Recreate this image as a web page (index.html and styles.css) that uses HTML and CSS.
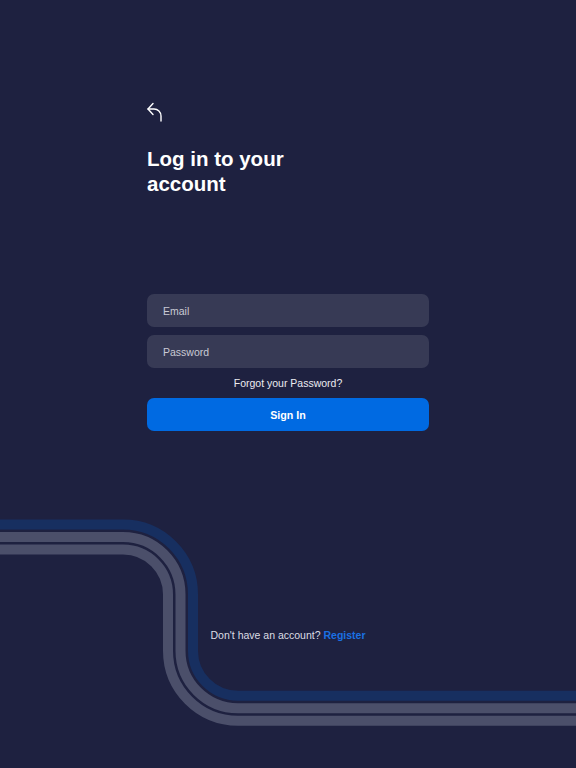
FILE: index.html
```html
<!DOCTYPE html>
<html lang="en">
<head>
    <meta charset="UTF-8">
    <meta name="viewport" content="width=device-width, initial-scale=1.0">
    <title>Log in</title>
    <link rel="stylesheet" href="styles.css">
</head>
<body>

    <div class="page">
        <!-- decorative stripes -->
        <svg class="stripes" width="576" height="768" viewBox="0 0 576 768" fill="none">
            <path d="M0 524.5 H123 A70 70 0 0 1 193 594.5 V650.7 A45 45 0 0 0 238 695.7 H576" stroke="#172f60" stroke-width="10"/>
            <path d="M0 537 H123 A57.5 57.5 0 0 1 180.5 594.5 V650.7 A57.5 57.5 0 0 0 238 708.2 H576" stroke="#4b4f6a" stroke-width="10"/>
            <path d="M0 549.5 H123 A45 45 0 0 1 168 594.5 V650.7 A70 70 0 0 0 238 720.7 H576" stroke="#4b4f6a" stroke-width="10"/>
        </svg>

        <div class="container">
            <a class="back" href="#">
                <svg width="16" height="20" viewBox="146 102 16 20" fill="none" stroke="#fff" stroke-width="1.4" stroke-linecap="round" stroke-linejoin="round">
                    <path d="M152 103.5 L147 109 L152 114.5"/>
                    <path d="M147 109 H153 A7 7 0 0 1 160 116 V121"/>
                </svg>
            </a>

            <h1 class="title">Log in to your<br>account</h1>

            <form class="login-form" onsubmit="return false">
                <input type="email" placeholder="Email">
                <input type="password" placeholder="Password">
                <a class="forgot" href="#">Forgot your Password?</a>
                <button type="submit">Sign In</button>
            </form>

            <p class="register">Don't have an account? <a href="#">Register</a></p>
        </div>
    </div>

</body>
</html>
```

FILE: styles.css
```css
/* Page */
body {
    margin: 0;
    background: #1e2140;
    font-family: "Liberation Sans", Arial, sans-serif;
    color: #fff;
}

.page {
    position: relative;
    width: 576px;
    height: 768px;
    overflow: hidden;
}

/* Background stripes */
.stripes {
    position: absolute;
    top: 0;
    left: 0;
}

.container {
    position: relative;
    width: 282px;
    margin: 0 auto;
    padding-top: 102px;
}

/* Back arrow */
.back {
    display: block;
    width: 16px;
    height: 20px;
}

.back svg {
    display: block;
}

/* Heading */
.title {
    margin: 24px 0 0;
    font-size: 20.5px;
    line-height: 25px;
    font-weight: bold;
}

/* Form */
.login-form {
    display: flex;
    flex-direction: column;
    gap: 8px;
    margin-top: 98px;
}

.login-form input {
    box-sizing: border-box;
    width: 100%;
    height: 33px;
    padding: 0 16px;
    border: none;
    outline: none;
    border-radius: 7px;
    background: #373a55;
    color: #fff;
    font-family: inherit;
    font-size: 10.5px;
}

.login-form input::placeholder {
    color: #c9cad4;
}

.forgot {
    display: block;
    text-align: center;
    font-size: 10.5px;
    line-height: 14px;
    color: #ececf2;
    text-decoration: none;
}

.login-form button {
    height: 33px;
    border: none;
    border-radius: 7px;
    background: #006ae2;
    color: #fff;
    font-family: inherit;
    font-size: 10.7px;
    font-weight: bold;
    cursor: pointer;
}

/* Register link */
.register {
    margin: 197px 0 0;
    text-align: center;
    font-size: 10.5px;
    line-height: 14px;
    color: #dcdde4;
}

.register a {
    color: #1a70e3;
    font-weight: bold;
    text-decoration: none;
}
```
